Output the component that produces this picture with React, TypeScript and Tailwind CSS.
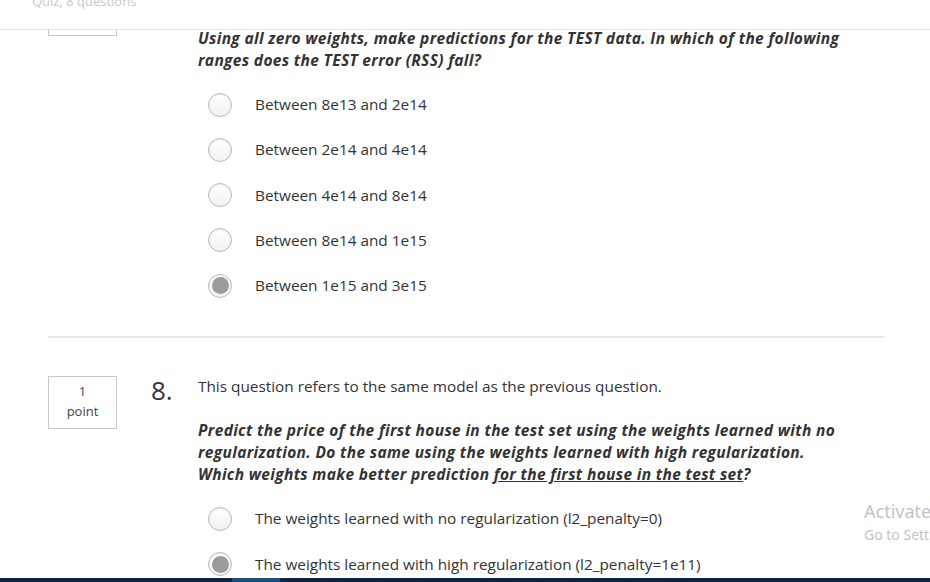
import { ReactNode } from "react";

type Option = { label: string; checked?: boolean };

const q7Options: Option[] = [
  { label: "Between 8e13 and 2e14" },
  { label: "Between 2e14 and 4e14" },
  { label: "Between 4e14 and 8e14" },
  { label: "Between 8e14 and 1e15" },
  { label: "Between 1e15 and 3e15", checked: true },
];

const q8Options: Option[] = [
  { label: "The weights learned with no regularization (l2_penalty=0)" },
  { label: "The weights learned with high regularization (l2_penalty=1e11)", checked: true },
];

function Radio({ checked }: { checked?: boolean }) {
  return (
    <span className="flex h-[24px] w-[24px] shrink-0 items-center justify-center rounded-full border border-[#b9b9b9] bg-gradient-to-b from-white to-[#f1f1f1] shadow-[inset_0_1px_2px_rgba(0,0,0,0.08)]">
      {checked && <span className="h-[17px] w-[17px] rounded-full bg-[#9b9b9b]" />}
    </span>
  );
}

function Options({ items }: { items: Option[] }) {
  return (
    <div className="flex flex-col">
      {items.map((item, i) => (
        <label key={i} className="flex h-[45.25px] items-center">
          <span className="ml-[10px]">
            <Radio checked={item.checked} />
          </span>
          <span className="ml-[23px] text-[15.35px] text-[#333]">{item.label}</span>
        </label>
      ))}
    </div>
  );
}

function PointBox({ children }: { children?: ReactNode }) {
  return (
    <div className="flex h-[53px] w-[69px] shrink-0 flex-col items-center border border-[#c8c8c8] pt-[4px] text-[13px] leading-[20px] text-[#444]">
      {children}
    </div>
  );
}

export default function App() {
  return (
    <div
      className="relative flex h-[582px] w-[930px] flex-col overflow-hidden bg-white"
      style={{ fontFamily: '"Open Sans", "Liberation Sans", sans-serif' }}
    >
      <header className="relative z-10 h-[30px] shrink-0 overflow-hidden border-b border-[#e2e2e2] bg-white">
        <p className="ml-[32px] mt-[-7px] text-[13px] leading-[16px] text-[#c9c9c9]">Quiz, 8 questions</p>
      </header>

      <main className="flex-1 overflow-hidden">
        <div className="mt-[-47px]">
          {/* question 7 */}
          <section className="flex">
            <div className="ml-[48px]">
              <PointBox />
            </div>
            <div className="ml-[81px] mt-[44px]">
              <p className="text-[15.5px] font-bold italic leading-[22px] tracking-[0.34px] text-[#333]">
                Using all zero weights, make predictions for the TEST data. In which of the following
                <br />
                ranges does the TEST error (RSS) fall?
              </p>
              <div className="mt-[11px]">
                <Options items={q7Options} />
              </div>
            </div>
          </section>

          <hr className="ml-[48px] mt-[28px] w-[836px] border-0 border-t-2 border-[#e6e6e6]" />

          {/* question 8 */}
          <section className="mt-[38px] flex">
            <div className="ml-[48px]">
              <PointBox>
                <span>1</span>
                <span>point</span>
              </PointBox>
            </div>
            <div className="ml-[34px] w-[47px] shrink-0 text-[26px] leading-[28px] text-[#333]">8.</div>
            <div className="-mt-[1px]">
              <p className="text-[15.35px] leading-[22px] text-[#333]">
                This question refers to the same model as the previous question.
              </p>
              <p className="mt-[22px] text-[15.5px] font-bold italic leading-[22px] tracking-[0.34px] text-[#333]">
                Predict the price of the first house in the test set using the weights learned with no
                <br />
                regularization. Do the same using the weights learned with high regularization.
                <br />
                Which weights make better prediction <span className="underline">for the first house in the test set</span>?
              </p>
              <div className="mt-[11px]">
                <Options items={q8Options} />
              </div>
            </div>
          </section>
        </div>
      </main>

      <div className="absolute left-[864px] top-[499px] text-[#c3c3c3]" style={{ fontFamily: '"Noto Sans", sans-serif' }}>
        <p className="whitespace-nowrap text-[18px] leading-[25px]">Activate Windows</p>
        <p className="whitespace-nowrap text-[14px] leading-[22px]">Go to Settings to activate Windows.</p>
      </div>

      <footer className="flex h-[4px] shrink-0 bg-[#0b2440]">
        <div className="ml-[232px] w-[48px] bg-[#1b4f82]" />
      </footer>
    </div>
  );
}
